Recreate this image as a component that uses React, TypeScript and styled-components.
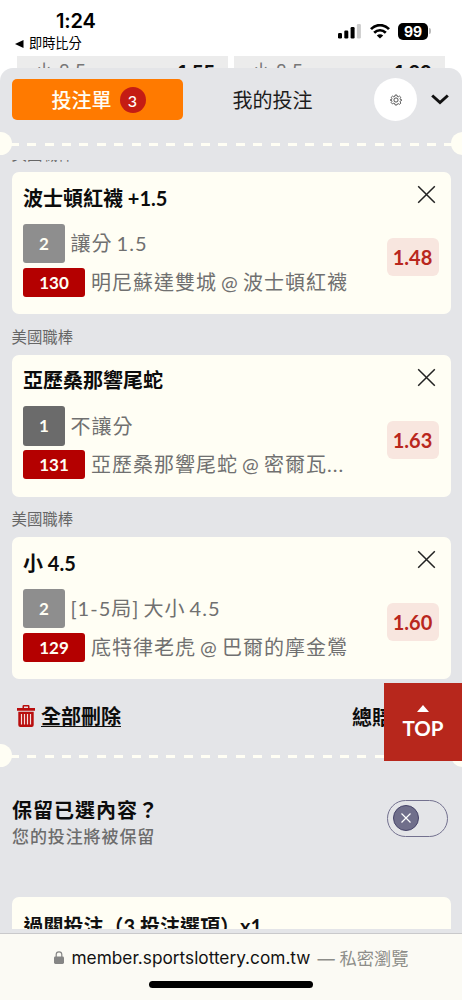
import React from "react";
import styled, { createGlobalStyle } from "styled-components";

const Global = createGlobalStyle`
  *, *::before, *::after { box-sizing: border-box; }
  body { margin: 0; background: #fff; }
  svg { display: block; flex: none; }
`;

const Screen = styled.div`
  width: 462px;
  height: 1000px;
  overflow: hidden;
  display: flex;
  flex-direction: column;
  background: #fff;
  color: #111;
  font-family: Lato, "Noto Sans CJK TC", sans-serif;
  white-space: nowrap;
`;

const StatusBar = styled.header`
  height: 56px;
  flex: none;
  display: flex;
  justify-content: space-between;
  padding: 11px 31px 0 15px;
  font-family: Inter, "Noto Sans CJK TC", sans-serif;
  color: #000;
`;
const Clock = styled.div`
  padding-left: 41px;
  font-size: 20px;
  line-height: 21px;
  font-weight: 600;
  letter-spacing: -0.2px;
`;
const BackLink = styled.div`
  display: flex;
  align-items: center;
  gap: 5px;
  height: 23px;
  font-size: 13.2px;
  line-height: 23px;
`;
const Signals = styled.div`
  display: flex;
  align-items: center;
  height: 18px;
  margin-top: 11px;
`;
const WifiIcon = styled.svg`
  margin-left: 8px;
`;
const Battery = styled.div`
  width: 30px;
  height: 17px;
  margin-left: 8px;
  border-radius: 5px;
  background: #000;
  color: #fff;
  font-size: 14px;
  line-height: 17px;
  font-weight: 700;
  text-align: center;
`;
const BatteryTip = styled.i`
  width: 2px;
  height: 6px;
  margin-left: 1px;
  border-radius: 0 2px 2px 0;
  background: #bbb;
`;

const Behind = styled.div`
  display: flex;
  flex: none;
  gap: 6px;
  height: 24px;
  margin-bottom: -12px;
  padding: 0 17px;
`;
const OddsStrip = styled.div`
  flex: 1;
  display: flex;
  justify-content: space-between;
  padding: 4px 13px 0 18px;
  background: #ececec;
  color: #777;
  font-family: Inter, "Noto Sans CJK TC", sans-serif;
  font-size: 18px;
  line-height: 24px;
  letter-spacing: 0.3px;
  overflow: hidden;
  b { color: #111; font-weight: 700; letter-spacing: 0; }
`;

const Sheet = styled.main`
  position: relative;
  flex: 1;
  min-height: 0;
  display: flex;
  flex-direction: column;
  background: #e4e5e8;
  border-radius: 13px 13px 0 0;
`;
const Tabs = styled.div`
  display: flex;
  align-items: center;
  flex: none;
  height: 63px;
  padding: 0 13.5px 0 11.5px;
`;
const Tab = styled.button<{ $active?: boolean }>`
  display: flex;
  align-items: center;
  justify-content: center;
  gap: 8px;
  width: ${(p) => (p.$active ? "171px" : "180px")};
  height: 40.5px;
  padding: ${(p) => (p.$active ? "0 0 0 3px" : "0")};
  border: 0;
  border-radius: 5px;
  background: ${(p) => (p.$active ? "#ff7a00" : "transparent")};
  color: ${(p) => (p.$active ? "#fffef5" : "#1c1c1c")};
  font: ${(p) => (p.$active ? 500 : 400)} 20px/40px Lato, "Noto Sans CJK TC", sans-serif;
`;
const Count = styled.span`
  width: 26px;
  height: 26px;
  border-radius: 50%;
  background: #c41c14;
  color: #fff;
  font-size: 16px;
  line-height: 27px;
  text-align: center;
`;
const Settings = styled.button`
  display: flex;
  align-items: center;
  justify-content: center;
  width: 43px;
  height: 43px;
  margin: 0 13.5px 0 11.5px;
  padding: 0;
  border: 0;
  border-radius: 50%;
  background: #fff;
`;

const Perforation = styled.div`
  flex: none;
  display: flex;
  justify-content: space-between;
  align-items: center;
  height: 24px;
  overflow: hidden;
  background: repeating-linear-gradient(90deg, #fffef4 0 9px, transparent 9px 17.37px) 9.7px 12px / 452px 3px no-repeat;
  &::before, &::after {
    content: "";
    width: 23px;
    height: 23px;
    border-radius: 50%;
    background: #fffef4;
  }
  &::before { margin-left: -11.5px; }
  &::after { margin-right: -11.5px; }
`;

const BetList = styled.section`
  flex: none;
  height: 522px;
  margin-top: 5px;
  padding: 0 11.5px;
  overflow: hidden;
`;
const League = styled.div<{ $first?: boolean }>`
  height: ${(p) => (p.$first ? "12.4px" : "40.4px")};
  display: flex;
  align-items: flex-end;
  color: #666;
  font-size: 15.4px;
  line-height: 36px;
`;
const Card = styled.article`
  display: flex;
  justify-content: space-between;
  height: 142px;
  padding: 12.5px 12px 0 11.5px;
  border-radius: 7px;
  background: #fffef4;
`;
const Info = styled.div`
  display: flex;
  flex-direction: column;
`;
const Pick = styled.h2`
  margin: 0 0 13px;
  color: #0c0c0c;
  font-size: 20px;
  line-height: 26px;
  font-weight: 700;
`;
const Line = styled.div<{ $team?: boolean }>`
  display: flex;
  align-items: center;
  gap: ${(p) => (p.$team ? "6px" : "5.5px")};
  margin-bottom: 4.5px;
  color: #707070;
  font-size: 20px;
  line-height: 29px;
  letter-spacing: 1px;
  word-spacing: -2px;
  font-weight: 400;
`;
const Words = styled.span`
  font-family: Lato, "Noto Sans CJK TC", sans-serif;
  font-weight: 400;
`;
const Tag = styled.span<{ $kind: "home" | "away" | "game" }>`
  width: ${(p) => (p.$kind === "game" ? "62px" : "42px")};
  height: ${(p) => (p.$kind === "game" ? "29px" : "39.5px")};
  line-height: ${(p) => (p.$kind === "game" ? "30px" : "40px")};
  border-radius: 3px;
  background: ${(p) => ({ home: "#8e8e8e", away: "#6b6b6b", game: "#b40000" })[p.$kind]};
  color: #fffef4;
  font-size: 17px;
  font-weight: 700;
  letter-spacing: 0;
  text-align: center;
`;
const Actions = styled.div`
  display: flex;
  flex-direction: column;
  align-items: flex-end;
  padding-top: 0.5px;
`;
const CloseIcon = styled.svg`
  margin: 0 3px 34px 0;
`;
const Odds = styled.div`
  width: 52px;
  height: 38px;
  border-radius: 6px;
  background: #f8e6df;
  color: #b9271d;
  font-size: 20px;
  font-weight: 700;
  line-height: 38px;
  text-align: center;
`;

const Summary = styled.div`
  display: flex;
  align-items: center;
  justify-content: space-between;
  flex: none;
  height: 61px;
  padding: 7px 5.5px 0 17px;
  color: #0c0c0c;
  font-size: 20px;
  font-weight: 700;
`;
const Clear = styled.button`
  display: flex;
  align-items: center;
  gap: 6px;
  padding: 0;
  border: 0;
  background: none;
  color: inherit;
  font: inherit;
  line-height: 24px;
  span { border-bottom: 1.5px solid #111; height: 22px; line-height: 22px; }
`;
const Keep = styled.section`
  flex: none;
  display: flex;
  justify-content: space-between;
  height: 130px;
  padding: 29px 14.5px 0 12px;
`;
const KeepTitle = styled.div`
  color: #0c0c0c;
  font-size: 20px;
  line-height: 28px;
  font-weight: 700;
  letter-spacing: 1px;
`;
const KeepNote = styled.div`
  color: #6c6c6c;
  font-size: 17px;
  line-height: 26px;
  font-weight: 500;
  letter-spacing: 0.9px;
`;
const Toggle = styled.button`
  width: 60.5px;
  height: 37.5px;
  margin-top: 3.5px;
  padding: 0 5px;
  display: flex;
  align-items: center;
  border: 1.5px solid #73718f;
  border-radius: 19px;
  background: transparent;
`;
const Knob = styled.span`
  display: flex;
  align-items: center;
  justify-content: center;
  width: 26px;
  height: 26px;
  border: 1.5px solid #464469;
  border-radius: 50%;
  background: #706f8b;
`;
const ParlayCard = styled.section`
  height: 32px;
  flex: none;
  margin: 0 11.5px;
  padding: 14px 12px 0;
  overflow: hidden;
  border-radius: 7px 7px 0 0;
  background: #fffef4;
  font-size: 20px;
  line-height: 30px;
  font-weight: 700;
`;
const TopButton = styled.button`
  position: absolute;
  right: 0;
  top: 614.5px;
  width: 78px;
  height: 78px;
  padding: 1px 0 0;
  display: flex;
  flex-direction: column;
  align-items: center;
  justify-content: center;
  gap: 4px;
  border: 0;
  background: #b7271c;
  color: #fff;
  font: 700 20.5px/24px Lato, sans-serif;
`;

const BrowserBar = styled.footer`
  flex: none;
  height: 67px;
  display: flex;
  flex-direction: column;
  align-items: center;
  border-top: 1px solid #c9c9cb;
  background: #fbfaf4;
  font-family: Inter, "Noto Sans CJK TC", sans-serif;
`;
const Address = styled.div`
  display: flex;
  align-items: center;
  height: 47px;
  font-size: 17.25px;
  color: #111;
  svg { margin-right: 8px; }
  span { margin-left: 7px; color: #8d8d89; }
`;
const HomeIndicator = styled.div`
  width: 164px;
  height: 7px;
  border-radius: 4px;
  background: #000;
`;

type Bet = { pick: string; side: string; market: string; game: string; teams: string; odds: string };

const bets: Bet[] = [
  { pick: "波士頓紅襪 +1.5", side: "2", market: "讓分 1.5", game: "130", teams: "明尼蘇達雙城 @ 波士頓紅襪", odds: "1.48" },
  { pick: "亞歷桑那響尾蛇", side: "1", market: "不讓分", game: "131", teams: "亞歷桑那響尾蛇 @ 密爾瓦...", odds: "1.63" },
  { pick: "小 4.5", side: "2", market: "[1-5局] 大小 4.5", game: "129", teams: "底特律老虎 @ 巴爾的摩金鶯", odds: "1.60" },
];

const BetCard = ({ bet }: { bet: Bet }) => (
  <Card>
    <Info>
      <Pick>{bet.pick}</Pick>
      <Line>
        <Tag $kind={bet.side === "1" ? "away" : "home"}>{bet.side}</Tag>
        <Words>{bet.market}</Words>
      </Line>
      <Line $team>
        <Tag $kind="game">{bet.game}</Tag>
        <Words>{bet.teams}</Words>
      </Line>
    </Info>
    <Actions>
      <CloseIcon width="19" height="19" viewBox="0 0 19 19" stroke="#222" strokeWidth="1.5">
        <path d="M1.2 1.2 17.8 17.8M17.8 1.2 1.2 17.8" />
      </CloseIcon>
      <Odds>{bet.odds}</Odds>
    </Actions>
  </Card>
);

export default function App() {
  return (
    <Screen>
      <Global />
      <StatusBar>
        <div>
          <Clock>1:24</Clock>
          <BackLink>
            <svg width="9" height="8" viewBox="0 0 9 8"><path d="M0 4 8.5 0V8Z" /></svg>
            即時比分
          </BackLink>
        </div>
        <Signals>
          <svg width="24" height="16" viewBox="0 0 24 16">
            <rect x="0" y="10" width="4" height="5.5" rx="1.2" />
            <rect x="6.3" y="7.5" width="4" height="8" rx="1.2" />
            <rect x="12.6" y="4" width="4" height="11.5" rx="1.2" />
            <rect x="18.9" y="1" width="4" height="14.5" rx="1.2" fill="#ccc" />
          </svg>
          <WifiIcon width="20" height="15" viewBox="0 0 20 15" fill="none" stroke="#000" strokeWidth="2.7">
            <path d="M1 5.2C6-.2 14-.2 19 5.2M4.2 8.8c3.4-3.4 8.2-3.4 11.6 0" />
            <path d="M10 14.6 6.8 11.5c1.8-1.7 4.6-1.7 6.4 0Z" fill="#000" stroke="none" />
          </WifiIcon>
          <Battery>99</Battery>
          <BatteryTip />
        </Signals>
      </StatusBar>
      <Behind>
        <OddsStrip><span>小 8.5</span><b>1.55</b></OddsStrip>
        <OddsStrip><span>小 8.5</span><b>1.60</b></OddsStrip>
      </Behind>
      <Sheet>
        <Tabs>
          <Tab $active>投注單<Count>3</Count></Tab>
          <Tab>我的投注</Tab>
          <Settings aria-label="設定">
            <svg width="12" height="12" viewBox="0 0 24 24" fill="none" stroke="#333" strokeWidth="1.7" strokeLinejoin="round">
              <path d="M10 1h4l.8 3.2 2.1.9 2.9-1.7 2.8 2.8-1.7 2.9.9 2.1L25 12l-3.2 2-.9 2 1.7 2.8-2.8 2.8-2.9-1.7-2.1.9L14 23h-4l-.8-3.2-2.1-.9-2.9 1.7-2.8-2.8 1.7-2.9-.9-2L-1 12l3.2-.8.9-2.1-1.7-2.9 2.8-2.8 2.9 1.7 2.1-.9Z" transform="translate(1.1 1.1) scale(.91)" />
              <circle cx="12" cy="12" r="4.2" />
            </svg>
          </Settings>
          <svg width="18" height="11" viewBox="0 0 18 11" fill="none" stroke="#111" strokeWidth="3"><path d="M1.2 1.5 9 8.5l7.8-7" /></svg>
        </Tabs>
        <Perforation />
        <BetList>
          {bets.map((bet, i) => (
            <React.Fragment key={bet.game}>
              <League $first={i === 0}>美國職棒</League>
              <BetCard bet={bet} />
            </React.Fragment>
          ))}
        </BetList>
        <Summary>
          <Clear>
            <svg width="18" height="22" viewBox="0 0 18 22">
              <path d="M0 3h5.5V1.2Q5.5 0 6.7 0h4.6q1.2 0 1.2 1.2V3H18v2.7H0ZM7 1.5V3h4V1.5ZM1.3 6.8h15.4V20q0 2-2 2H3.3q-2 0-2-2Z" fill="#b90e0e" fillRule="evenodd" />
              <path d="M4.5 9v10.5M7.5 9v10.5M10.5 9v10.5M13.5 9v10.5" stroke="#f5dede" strokeWidth="1.2" />
            </svg>
            <span>全部刪除</span>
          </Clear>
          <div>總賠率 3.86</div>
        </Summary>
        <Perforation />
        <Keep>
          <div>
            <KeepTitle>保留已選內容？</KeepTitle>
            <KeepNote>您的投注將被保留</KeepNote>
          </div>
          <Toggle aria-label="保留">
            <Knob>
              <svg width="10" height="10" viewBox="0 0 10 10" stroke="#fff" strokeWidth="1.2"><path d="m.5.5 9 9m0-9-9 9" /></svg>
            </Knob>
          </Toggle>
        </Keep>
        <ParlayCard>過關投注（3 投注選項）x1</ParlayCard>
        <TopButton>
          <svg width="12" height="7" viewBox="0 0 12 7" fill="#fff"><path d="M0 7 6 0l6 7Z" /></svg>
          TOP
        </TopButton>
      </Sheet>
      <BrowserBar>
        <Address>
          <svg width="10" height="13" viewBox="0 0 10 13" fill="#858585">
            <rect y="5.5" width="10" height="7.5" rx="1.4" />
            <path d="M2.2 6V3.6a2.8 2.8 0 0 1 5.6 0V6" fill="none" stroke="#858585" strokeWidth="1.2" />
          </svg>
          member.sportslottery.com.tw
          <span>— 私密瀏覽</span>
        </Address>
        <HomeIndicator />
      </BrowserBar>
    </Screen>
  );
}
